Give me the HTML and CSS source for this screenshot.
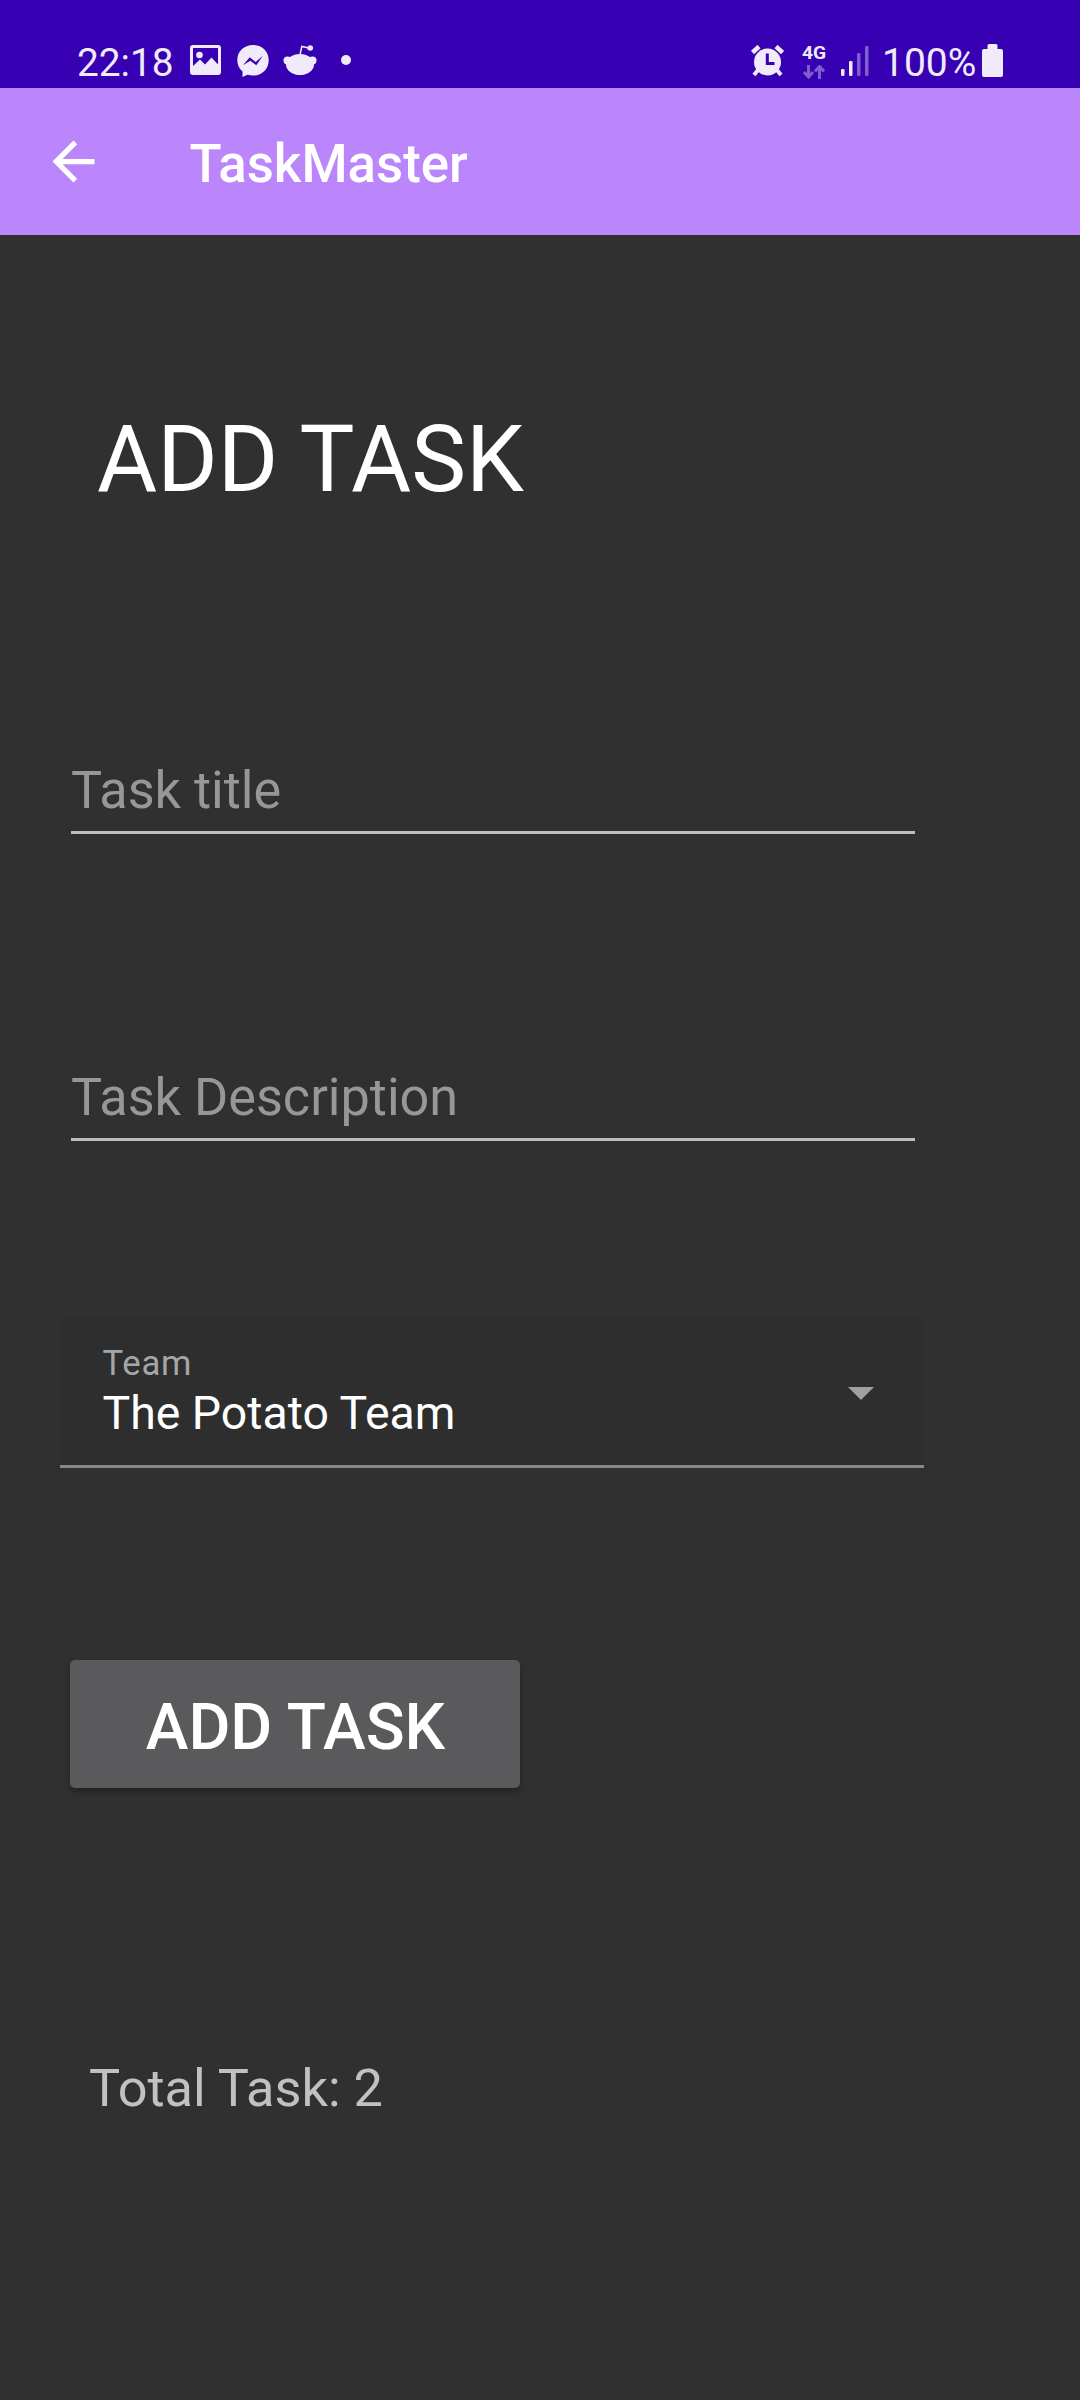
FILE: index.html
```
<!DOCTYPE html>
<html lang="en">
<head>
<meta charset="utf-8">
<title>TaskMaster</title>
<link rel="stylesheet" href="styles.css">
</head>
<body>
<div class="status">
  <span class="clock">22:18</span>
  <svg class="icon picture" width="31" height="30" viewBox="0 0 31 30"><path fill-rule="evenodd" d="M3 0H28Q31 0 31 3V27Q31 30 28 30H3Q0 30 0 27V3Q0 0 3 0ZM3 3V21L10 14.500L15 19.500L21.500 12.500L28 19.500V3Z"/><circle cx="9.500" cy="10" r="3.300"/></svg>
  <svg class="icon messenger" width="32" height="32" viewBox="0 0 32 32"><path d="M16 0C7 0 .3 6.400.3 15.200C.3 20 2.400 23.800 5.500 26.600V32L10.500 29.800Q13 30.600 16 30.600C25 30.600 31.700 24 31.700 15.200S25 0 16 0Z"/><path class="cut" d="M6 20.300L12.700 12.300L18.700 17L25.800 10.800L19.300 20.200L13.300 15.700Z"/></svg>
  <svg class="icon reddit" width="34" height="30" viewBox="0 0 34 30"><ellipse cx="17" cy="19.500" rx="14" ry="10.500"/><circle cx="4.500" cy="15.500" r="4"/><circle cx="29.500" cy="15.500" r="4"/><circle cx="27.200" cy="3" r="2.800"/><path class="line" d="M17 10L18.800 1.500L27 3.200"/></svg>
  <span class="dot"></span>
  <svg class="icon alarm" width="33" height="32" viewBox="0 0 33 32"><circle cx="16.500" cy="17" r="13.500"/><path class="thick" d="M1.500 7.500L8 1.500M31.500 7.500L25 1.500"/><path class="leg" d="M7 25L3 30M26 25L30 30"/><path class="hands" d="M16.300 8.500V18.500H23.500"/></svg>
  <span class="network">
    <span class="network-label">4G</span>
    <svg class="faded" width="22" height="14" viewBox="0 0 22 14"><path d="M5.500 0V11.500M1 7L5.500 12L10 7M16.500 14V2M12 6.500L16.500 1.500L21 6.500"/></svg>
  </span>
  <svg class="icon signal" width="28" height="31" viewBox="0 0 28 31"><rect y="24" width="3.500" height="7" rx="1.300"/><rect x="8" y="16" width="3.500" height="15" rx="1.300"/><g opacity=".4"><rect x="16" y="8" width="3.500" height="23" rx="1.300"/><rect x="24" y="1" width="3.500" height="30" rx="1.300"/></g></svg>
  <span class="percent">100%</span>
  <svg class="icon battery" width="21" height="33" viewBox="0 0 21 33"><path d="M7 0H14Q15.500 0 15.500 1.500V5H19Q21 5 21 7V31Q21 33 19 33H2Q0 33 0 31V7Q0 5 2 5H5.500V1.500Q5.500 0 7 0Z"/></svg>
</div>
<header class="appbar">
  <svg class="back" width="63" height="63" viewBox="0 0 24 24"><path d="M20 11H7.830l5.590-5.590L12 4l-8 8 8 8 1.410-1.410L7.830 13H20z"/></svg>
  <span class="brand">TaskMaster</span>
</header>
<main class="content">
  <h1 class="heading">ADD TASK</h1>
  <div class="field title-field">Task title</div>
  <div class="field description-field">Task Description</div>
  <div class="select">
    <div class="select-text">
      <div class="select-label">Team</div>
      <div class="select-value">The Potato Team</div>
    </div>
    <svg class="caret" width="26" height="13" viewBox="0 0 26 13"><path d="M0 0H26L13 13Z"/></svg>
  </div>
  <button class="submit">ADD TASK</button>
  <p class="total">Total Task: 2</p>
</main>
</body>
</html>
```
FILE: styles.css
```
* { box-sizing: border-box; }

body {
  margin: 0;
  width: 1080px;
  height: 2400px;
  background: #303030;
  color: #fff;
  font-family: Roboto, sans-serif;
}

svg { display: block; flex: none; }

.status {
  display: flex;
  align-items: flex-start;
  height: 88px;
  padding: 40px 0 0 77px;
  background: #3700b3;
  color: #f1eafb;
  fill: #f1eafb;
  line-height: 46px;
}

.clock { width: 113px; font-size: 38.8px; }
.icon { margin-top: 5px; }
.messenger { margin-left: 16px; }
.cut { fill: #3700b3; }
.reddit { margin-left: 14px; }
.line { fill: none; stroke: #f1eafb; stroke-width: 1.5; }

.dot {
  width: 10px;
  height: 10px;
  margin: 15px 0 0 24px;
  border-radius: 50%;
  background: #f1eafb;
}

.alarm { margin-left: 400px; }
.thick { fill: none; stroke: #f1eafb; stroke-width: 4.5; }
.leg { fill: none; stroke: #f1eafb; stroke-width: 4; }
.hands { fill: none; stroke: #3700b3; stroke-width: 3; }

.network {
  display: flex;
  flex-direction: column;
  width: 24px;
  margin: 4px 0 0 18px;
}

.network-label {
  height: 21px;
  font-size: 19.2px;
  font-weight: 700;
  line-height: 18px;
}

.faded { margin-left: 1px; opacity: .4; }
.faded path { fill: none; stroke: #f1eafb; stroke-width: 3; }
.signal { margin-left: 15px; }
.percent { width: 100px; margin-left: 13px; font-size: 39px; }
.battery { margin-top: 4px; }

.appbar {
  display: flex;
  height: 147px;
  padding: 42px 0 0 42px;
  background: #bb86fc;
}

.back { fill: #fff; }

.brand {
  margin: 3px 0 0 84.5px;
  font-size: 52.8px;
  font-weight: 500;
  line-height: 62px;
}

.content {
  display: flex;
  flex-direction: column;
  align-items: flex-start;
  padding-top: 171px;
}

.heading {
  margin: 0 0 0 97px;
  font-size: 92.3px;
  font-weight: 400;
  line-height: 108px;
}

.field {
  width: 844px;
  margin-left: 71px;
  padding-bottom: 9px;
  border-bottom: 3px solid #bcbebd;
  color: #979797;
  font-size: 52.2px;
  line-height: 62px;
}

.title-field { margin-top: 246px; }
.description-field { margin-top: 233px; }

.select {
  display: flex;
  justify-content: space-between;
  width: 864px;
  height: 151px;
  margin: 176px 0 0 60px;
  padding: 25px 50px 0 42.5px;
  border-bottom: 3px solid #878787;
  border-radius: 10px 10px 0 0;
  background: #2e2e2e;
}

.select-label {
  color: #a6a6a6;
  font-size: 34.65px;
  letter-spacing: .8px;
  line-height: 42px;
}

.select-value {
  margin-top: 2px;
  font-size: 46.4px;
  line-height: 54px;
}

.caret { margin-top: 45px; fill: #a0a0a0; }

.submit {
  width: 450px;
  height: 128px;
  margin: 192px 0 0 70px;
  padding: 6px 0 0 1px;
  border: 0;
  border-radius: 5px;
  background: #5a5a5c;
  box-shadow: 0 4px 6px rgba(0, 0, 0, .3);
  color: #fff;
  font: 500 64.3px/76px Roboto, sans-serif;
}

.total {
  margin: 269px 0 0 89px;
  color: #c1c1c1;
  font-size: 52.3px;
  line-height: 62px;
}
```
